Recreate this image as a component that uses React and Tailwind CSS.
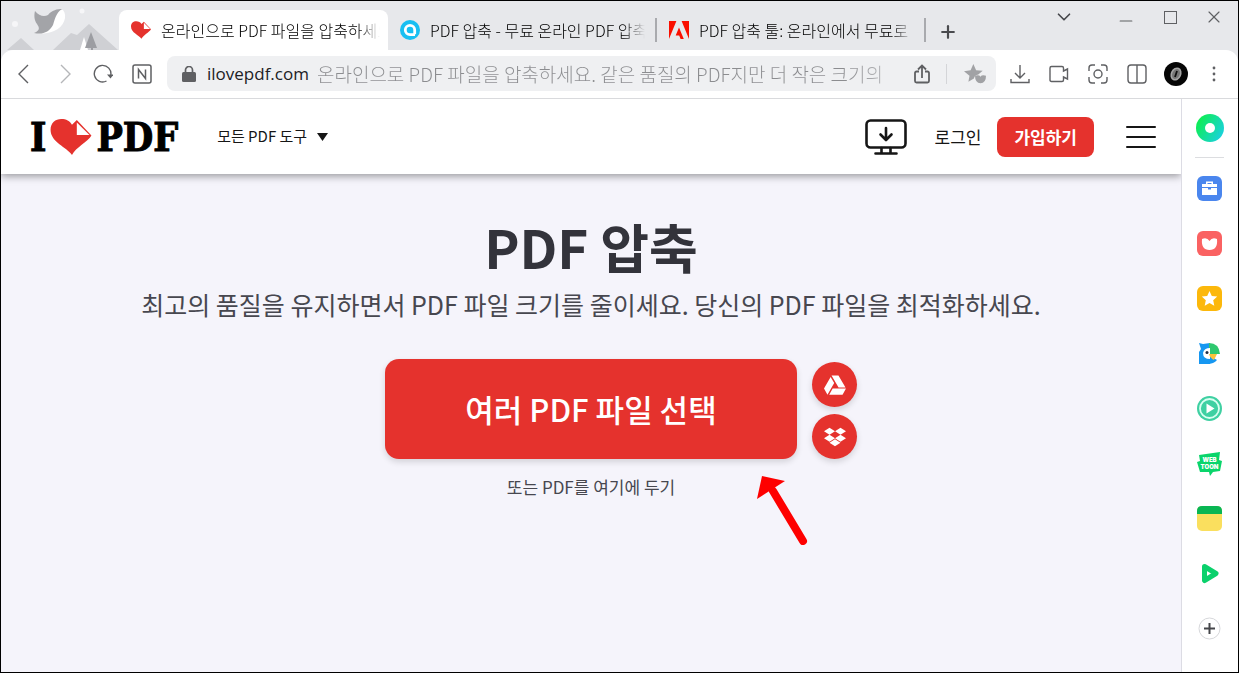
import { ChevronDown, Minus, X, Plus } from 'lucide-react'
import { FaDropbox, FaGoogleDrive } from 'react-icons/fa'
import { clsx } from 'clsx'

const HeartLogo = ({ className }) => (
  <svg viewBox="0 0 42 37" className={className} aria-hidden="true">
    <path
      fill="#e5322d"
      d="M22 37C17 29 0 24 0 11C0 4 5 0 11 0C16 0 20 2 22 6L27 1L42 17C38 24 26 29 22 37Z"
    />
    <path fill="#fff" d="M27 3.500V16.500H40Z" />
  </svg>
)

const SmallpdfIcon = () => (
  <svg viewBox="0 0 20 20" className="size-5 shrink-0" aria-hidden="true">
    <circle cx="10" cy="10" r="10" fill="#17bff2" />
    <path fill="none" stroke="#fff" strokeWidth="2.800" d="M14.700 14.200V10A4.700 4.700 0 1 0 10 14.700H15" />
  </svg>
)

const AdobeIcon = () => (
  <svg viewBox="0 0 20 18" className="h-[18px] w-5 shrink-0" fill="#fa0f00" aria-hidden="true">
    <path d="M0 0H7.400L0 18ZM12.600 0H20V18ZM10 6.600L14.800 18H11.600L10.200 14.400H6.700Z" />
  </svg>
)

const tabs = [
  { title: '온라인으로 PDF 파일을 압축하세요', icon: <HeartLogo className="h-[18px] w-5 shrink-0" />, active: true },
  { title: 'PDF 압축 - 무료 온라인 PDF 압축', icon: <SmallpdfIcon /> },
  { title: 'PDF 압축 툴: 온라인에서 무료로', icon: <AdobeIcon /> },
]

const Tab = ({ title, icon, active }) => (
  <button
    role="tab"
    aria-selected={!!active}
    className={clsx(
      'flex h-10 w-[269px] min-w-0 items-center gap-[10px] pl-3',
      active && 'rounded-t-lg bg-white pr-2',
    )}
  >
    {icon}
    <span className="min-w-0 flex-1 overflow-hidden bg-linear-to-r from-black from-90% to-transparent bg-clip-text text-left text-[16px] leading-6 font-light whitespace-nowrap text-transparent">
      {title}
    </span>
    {!active && <span className="h-6 w-[2px] bg-[#a9aaae]" />}
  </button>
)

const Scenery = () => (
  <svg viewBox="0 0 118 49" className="h-[49px] w-[118px] shrink-0" aria-hidden="true">
    <path fill="#cfd0d4" d="M6 49L20 37L33 49ZM52 49L70 32L76 34L88 23L117 49Z" />
    <path fill="#fff" d="M83 36L87 49H79Z" />
    <path fill="#9c9da2" d="M90 31L96 47H84Z" />
    <path fill="#9c9da2" d="M90 45h2v4h-2z" />
    <path fill="#fff" d="M46 17C49 10 56 8 62 9C67 15 63 26 53 30C48 32 43 33 38 32C45 28 43 22 46 17Z" />
    <path fill="#a3a4a8" d="M34 10C38 15 43 16 47 14C51 9 56 8 61 8C55 12 54 18 52 24C48 31 42 34 33 32C40 29 38 26 36 23C33 19 33 14 34 10Z" />
    <circle cx="14" cy="23" r="3" fill="#f6f6f8" />
    <circle cx="81" cy="10" r="2.500" fill="#f6f6f8" />
  </svg>
)

const ToolButton = ({ label, faded, children }) => (
  <button aria-label={label} className={clsx('flex h-9 w-[39px] shrink-0 items-center justify-center', faded ? 'text-[#b5b6b9]' : 'text-[#5f6063]')}>
    {children}
  </button>
)

const Line = ({ children, className = 'size-5', width = 1.4 }) => (
  <svg viewBox="0 0 20 20" className={className} fill="none" stroke="currentColor" strokeWidth={width} aria-hidden="true">
    {children}
  </svg>
)

const TitleBar = () => (
  <div className="flex h-[49px] items-end bg-[#e7e8eb]">
    <Scenery />
    <div role="tablist" className="flex min-w-0">
      {tabs.map((tab) => <Tab key={tab.title} {...tab} />)}
    </div>
    <button aria-label="새 탭" className="flex h-9 w-11 shrink-0 items-center justify-center text-[#4a4b4e]">
      <Plus size={20} strokeWidth={2.6} />
    </button>
    <div className="ml-auto flex shrink-0 items-center self-start text-[#5f6063]">
      <button aria-label="탭 검색" className="flex h-8 w-[60px] items-center justify-center text-[#45464a]"><ChevronDown size={22} strokeWidth={1.8} /></button>
      <button aria-label="최소화" className="flex h-8 w-16 items-center justify-center pt-2"><Minus size={20} strokeWidth={1.4} /></button>
      <button aria-label="최대화" className="flex h-7 w-6 items-center justify-center"><span className="size-[13px] border border-current" /></button>
      <button aria-label="닫기" className="ml-2 flex h-7 w-12 items-center justify-center"><X size={20} strokeWidth={1.4} /></button>
    </div>
  </div>
)

const Toolbar = () => (
  <div className="bg-[#e7e8eb]">
    <div className="flex h-[49px] items-center rounded-t-xl border-b border-[#d9dadd] bg-white px-1 pb-px">
      <ToolButton label="뒤로"><Line><path d="M13 1L4 10L13 19" /></Line></ToolButton>
      <ToolButton label="앞으로" faded><Line><path d="M7 1L16 10L7 19" /></Line></ToolButton>
      <ToolButton label="새로고침">
        <Line>
          <path d="M13.500 17A8.300 8.300 0 1 1 17.800 11" />
          <path fill="currentColor" stroke="none" d="M14 10.500H20.500L17.500 14.500Z" />
        </Line>
      </ToolButton>
      <ToolButton label="네이버">
        <Line width={1.5}>
          <rect x="1" y="1" width="18" height="18" rx="2" />
          <path d="M6.500 14.500V5.500L13.500 14.500V5.500" />
        </Line>
      </ToolButton>
      <div className="ml-[6px] flex h-[35px] min-w-0 flex-1 items-center rounded-lg bg-[#eff0f2] pl-[15px]">
        <svg viewBox="0 0 14 16" className="h-4 w-[14px] shrink-0 text-[#5f6063]" aria-hidden="true">
          <rect y="6" width="14" height="10" rx="1.500" fill="currentColor" />
          <path d="M3.500 7V4A3.500 3.500 0 0 1 10.500 4V7" fill="none" stroke="currentColor" strokeWidth="1.700" />
        </svg>
        <span className="ml-[11px] font-['Open_Sans',sans-serif] text-[17px] text-[#202124]">ilovepdf.com</span>
        <span className="ml-2 min-w-0 flex-1 overflow-hidden bg-linear-to-r from-[#8c8d90] from-90% to-[#c4c5c8] bg-clip-text text-[19px] leading-7 font-light whitespace-nowrap text-transparent">
          온라인으로 PDF 파일을 압축하세요. 같은 품질의 PDF지만 더 작은 크기의
        </span>
        <ToolButton label="공유">
          <Line width={1.8}>
            <path d="M7 7.500H4.500A1.500 1.500 0 0 0 3 9V17A1.500 1.500 0 0 0 4.500 18.500H15.500A1.500 1.500 0 0 0 17 17V9A1.500 1.500 0 0 0 15.500 7.500H13M10 14V1.500M6 5.500L10 1.500L14 5.500" />
          </Line>
        </ToolButton>
        <span className="mr-2 ml-[5px] h-5 w-px bg-[#d4d5d8]" />
        <ToolButton label="북마크" faded>
          <svg viewBox="0 0 20 20" className="size-[22px]" fill="#a1a2a5" aria-hidden="true">
            <path d="M8.500 1L11 6.500L17 7L13 10.500A5 5 0 0 0 9 14L4 17L5 11.500L0 7.500L6 6.500Z" />
            <path d="M10 11.500Q14 10.500 15 12.500Q16 10.500 20 11.500Q20 18 15 18.500Q10 18 10 11.500Z" />
          </svg>
        </ToolButton>
        <span className="w-[2px]" />
      </div>
      <div className="ml-1 flex shrink-0">
        <ToolButton label="다운로드"><Line><path d="M10 1V13.500M5 9L10 14L15 9M1 15V18.500H19V15" /></Line></ToolButton>
        <ToolButton label="녹화"><Line><path d="M2.500 2.500H13Q14.500 2.500 14.500 4V7L18.500 5V15L14.500 13V16Q14.500 17.500 13 17.500H2.500Q1 17.500 1 16V4Q1 2.500 2.500 2.500Z" /></Line></ToolButton>
        <ToolButton label="캡처">
          <Line>
            <path d="M7 1H4Q1 1 1 4V7M13 1H16Q19 1 19 4V7M7 19H4Q1 19 1 16V13M13 19H16Q19 19 19 16V13" />
            <circle cx="10" cy="10" r="4" />
          </Line>
        </ToolButton>
        <ToolButton label="화면 분할"><Line><rect x="1" y="1" width="18" height="18" rx="3" /><path d="M10 1V19" /></Line></ToolButton>
        <ToolButton label="프로필">
          <svg viewBox="0 0 24 24" className="size-6" aria-hidden="true">
            <circle cx="12" cy="12" r="12" fill="#060606" />
            <ellipse cx="12" cy="12" rx="4.500" ry="6" transform="rotate(25 12 12)" fill="#777" stroke="#a5a5a5" strokeWidth="1.600" />
            <path d="M11 15L13 9" stroke="#111" strokeWidth="1.800" />
          </svg>
        </ToolButton>
        <ToolButton label="메뉴">
          <svg viewBox="0 0 20 20" className="size-5" fill="currentColor" aria-hidden="true">
            <circle cx="9" cy="4" r="1.400" /><circle cx="9" cy="10" r="1.400" /><circle cx="9" cy="16" r="1.400" />
          </svg>
        </ToolButton>
      </div>
    </div>
  </div>
)

const Header = () => (
  <header className="relative flex h-[75px] items-center bg-white pr-[25px] pl-[29px] text-[#161616] shadow-[0_2px_8px_rgba(0,0,0,0.4)]">
    <a href="#home" aria-label="I love PDF" className="flex items-center gap-1 font-['DejaVu_Serif_Condensed','DejaVu_Serif',serif] text-[39px] leading-10 font-bold text-black [-webkit-text-stroke:1px_black]">
      I
      <HeartLogo className="h-9 w-[42px]" />
      PDF
    </a>
    <button className="ml-[39px] flex items-center gap-[10px] text-[15px]">
      모든 PDF 도구
      <svg viewBox="0 0 11 8" className="h-2 w-[11px]" fill="currentColor" aria-hidden="true"><path d="M0 0H11L5.500 8Z" /></svg>
    </button>
    <nav className="ml-auto flex items-center">
      <a href="#desktop" aria-label="데스크톱 앱">
        <svg viewBox="0 0 42 36" className="h-9 w-[42px]" fill="none" stroke="currentColor" strokeWidth="2.600" strokeLinecap="round" strokeLinejoin="round" aria-hidden="true">
          <rect x="1.500" y="1.500" width="39" height="27" rx="4" />
          <path d="M21 9V20.500M15.500 15.500L21 21L26.500 15.500M16.500 29V34M25.500 29V34M10.500 34.500H31.500" />
        </svg>
      </a>
      <a href="#login" className="ml-7 text-[17px]">로그인</a>
      <a href="#register" className="ml-4 flex h-10 items-center rounded-lg bg-[#e5322d] px-[17px] text-[17px] font-bold text-white">가입하기</a>
      <button aria-label="메뉴" className="ml-8 flex w-[30px] flex-col gap-2">
        <span className="h-[2px] rounded bg-[#161616]" />
        <span className="h-[2px] rounded bg-[#161616]" />
        <span className="h-[2px] rounded bg-[#161616]" />
      </button>
    </nav>
  </header>
)

const CloudButton = ({ label, children }) => (
  <button aria-label={label} className="flex size-[45px] items-center justify-center rounded-full bg-[#e5322d] text-white shadow-[0_3px_6px_rgba(0,0,0,0.14)]">
    {children}
  </button>
)

const Uploader = () => (
  <section className="flex flex-col items-center px-4 pt-9 pb-8 text-center">
    <h1 className="text-[53px] leading-[72px] font-bold text-[#33333b]">PDF 압축</h1>
    <p className="mt-1 text-[25px] leading-9 text-[#47474f]">
      최고의 품질을 유지하면서 PDF 파일 크기를 줄이세요. 당신의 PDF 파일을 최적화하세요.
    </p>
    <div className="relative mt-[37px] grid w-full grid-cols-[1fr_auto_1fr] items-end gap-x-[15px]">
      <button className="col-start-2 flex h-[100px] w-[412px] items-center justify-center rounded-[14px] bg-[#e5322d] text-[31px] font-medium text-white shadow-[0_3px_6px_rgba(0,0,0,0.14)]">
        여러 PDF 파일 선택
      </button>
      <div className="flex flex-col gap-[7px]">
        <CloudButton label="Google Drive"><FaGoogleDrive size={22} /></CloudButton>
        <CloudButton label="Dropbox"><FaDropbox size={22} /></CloudButton>
      </div>
      <svg viewBox="0 0 52 70" className="absolute top-full left-1/2 mt-4 ml-[165px] h-[70px] w-[52px]" aria-hidden="true">
        <path d="M17 16L47 66" stroke="#fe0000" strokeWidth="8" strokeLinecap="round" />
        <path d="M6 1L1 24L29 6Z" fill="#fe0000" />
      </svg>
    </div>
    <p className="mt-4 text-[17px] leading-6 text-[#47474f]">또는 PDF를 여기에 두기</p>
  </section>
)

const sideApps = [
  {
    label: '도구',
    art: (
      <>
        <rect width="25" height="25" rx="6" fill="#4a86ee" />
        <path fill="#fff" d="M9 5.500H16V8H20V11H5V8H9ZM10.500 7V8H14.500V7ZM5 12H11V13.500H14V12H20V19H5Z" />
      </>
    ),
  },
  {
    label: '웨일 스토어',
    art: (
      <>
        <rect width="25" height="25" rx="6" fill="#fa6262" />
        <path fill="#fff" d="M5 8Q10 6 12.500 10Q15 6 20 8Q21 19 12.500 19Q4 19 5 8Z" />
      </>
    ),
  },
  {
    label: '즐겨찾기',
    art: (
      <>
        <rect width="25" height="25" rx="6" fill="#fcb80b" />
        <path fill="#fff" d="M12.500 5L14.800 10L20.200 10.600L16.200 14.300L17.300 19.700L12.500 17L7.700 19.700L8.800 14.300L4.800 10.600L10.200 10Z" />
      </>
    ),
  },
  {
    label: '파파고',
    art: (
      <>
        <path fill="#1697f1" d="M2 2L6 3L13 2V23H2V11L4 8Z" />
        <path fill="#1697f1" d="M10 13L20 19Q17 23 10 23Z" />
        <path fill="#2fc86f" d="M12 2Q22 2 23 13H12Z" />
        <path fill="#fff" d="M13 7V18Q6 18 6 12Q7 7 13 7Z" />
        <circle cx="10" cy="11.500" r="1.500" fill="#202c44" />
        <path fill="#fbc33a" d="M12 13H20L17 19Q13 17 12 13Z" />
      </>
    ),
  },
  {
    label: '뮤직',
    art: (
      <>
        <circle cx="12.500" cy="12.500" r="12.500" fill="#3fd0a2" />
        <circle cx="12.500" cy="12.500" r="9.500" fill="none" stroke="#d9fff1" strokeWidth="1.800" />
        <path fill="#fff" d="M9.500 7.500L17.500 12.500L9.500 17.500Z" />
      </>
    ),
  },
  {
    label: '웹툰',
    art: (
      <>
        <path fill="#0ad56b" d="M2 4L23 1L22 9L25 10L23 20L16 21L13 25L12 21L3 21L0 11L3 10Z" />
        <g fill="#fff" fontFamily="Inter, sans-serif" fontWeight="900" fontSize="6" textAnchor="middle">
          <text x="12.500" y="10.500">WEB</text>
          <text x="12.500" y="18">TOON</text>
        </g>
      </>
    ),
  },
  {
    label: '메모',
    art: (
      <>
        <rect width="25" height="25" rx="5" fill="#fadf5e" />
        <path fill="#09b653" d="M0 8V5Q0 0 5 0H20Q25 0 25 5V8Z" />
      </>
    ),
  },
  {
    label: '네이버 TV',
    art: <path fill="none" stroke="#0bd16c" strokeWidth="5" strokeLinejoin="round" d="M7.500 5.500L19 12.500L7.500 19.500Z" />,
  },
  {
    label: '추가',
    art: (
      <>
        <circle cx="12.500" cy="12.500" r="10.500" fill="#fff" stroke="#d7d8db" />
        <path stroke="#45464a" strokeWidth="2" d="M12.500 7V18M7 12.500H18" />
      </>
    ),
  },
]

const Sidebar = () => (
  <aside className="flex w-[57px] shrink-0 flex-col items-center border-l border-[#dcdce4] bg-white pt-[15px] pr-px">
    <button aria-label="웨일" className="size-7 rounded-full bg-linear-[120deg] from-[#0cf23c] to-[#1ccdf2] p-[9px]">
      <span className="block size-[10px] rounded-full bg-white" />
    </button>
    <hr className="mt-[15px] mb-[18px] w-[29px] border-[#dcdde0]" />
    <div className="flex flex-col gap-[30px]">
      {sideApps.map(({ label, art }) => (
        <button key={label} aria-label={label}>
          <svg viewBox="0 0 25 25" className="size-[25px]" aria-hidden="true">{art}</svg>
        </button>
      ))}
    </div>
  </aside>
)

export default function App() {
  return (
    <div className="flex min-h-screen flex-col border border-black bg-white font-['Noto_Sans_CJK_KR',sans-serif]">
      <TitleBar />
      <Toolbar />
      <div className="flex flex-1">
        <main className="min-w-0 flex-1 overflow-hidden bg-[#f5f4fb]">
          <Header />
          <Uploader />
        </main>
        <Sidebar />
      </div>
    </div>
  )
}
